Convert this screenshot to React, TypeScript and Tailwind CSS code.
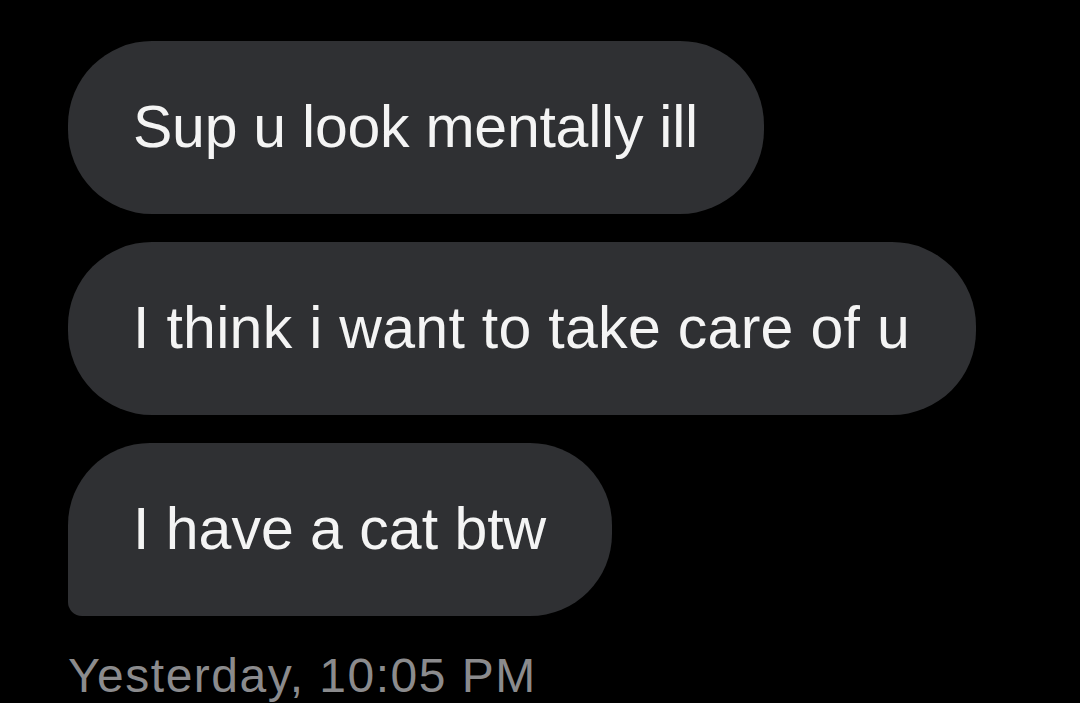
const messages = [
  { text: 'Sup u look mentally ill', tail: false, tracking: 'tracking-[-0.25px]' },
  { text: 'I think i want to take care of u', tail: false, tracking: 'tracking-[0.3px]' },
  { text: 'I have a cat btw', tail: true, tracking: 'tracking-normal' },
];

function Bubble({ text, tail, tracking }: { text: string; tail: boolean; tracking: string }) {
  return (
    <div
      className={`flex h-[173px] items-center bg-[#2f3033] pl-[65px] pr-[66px] ${
        tail ? 'rounded-[82px] rounded-bl-[14px]' : 'rounded-[84px]'
      }`}
    >
      <span className={`text-[59px] leading-none text-[#f4f4f4] whitespace-nowrap ${tracking}`}>{text}</span>
    </div>
  );
}

export default function App() {
  return (
    <div
      className="h-[703px] w-[1080px] overflow-hidden bg-black pl-[68px] pt-[41px]"
      style={{ fontFamily: '"Liberation Sans", Arial, sans-serif' }}
    >
      <div className="flex flex-col items-start gap-[28px]">
        {messages.map((m) => (
          <Bubble key={m.text} text={m.text} tail={m.tail} tracking={m.tracking} />
        ))}
      </div>
      <div className="mt-[36px] text-[48px] leading-none tracking-[1.5px] text-[#8b8b8d]">
        Yesterday, 10:05 PM
      </div>
    </div>
  );
}
